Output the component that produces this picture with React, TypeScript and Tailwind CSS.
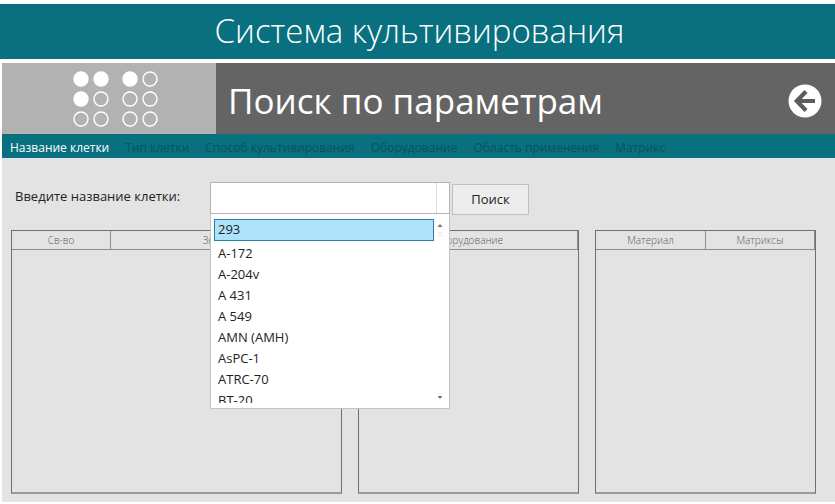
import { useState } from 'react';

interface Grid {
  id: string;
  columns: { title: string; width: string }[];
}

const TABS = [
  'Название клетки',
  'Тип клетки',
  'Способ культивирования',
  'Оборудование',
  'Область применения',
  'Матрикс',
];

const CELLS = ['293', 'A-172', 'A-204v', 'A 431', 'A 549', 'AMN (AMH)', 'AsPC-1', 'ATRC-70', 'BT-20'];

const GRIDS: Grid[] = [
  { id: 'props', columns: [{ title: 'Св-во', width: 'w-[30%]' }, { title: 'Значение', width: 'w-[70%]' }] },
  { id: 'equipment', columns: [{ title: 'Оборудование', width: 'w-full' }] },
  { id: 'matrix', columns: [{ title: 'Материал', width: 'w-1/2' }, { title: 'Матриксы', width: 'w-1/2' }] },
];

// Two blocks of 2x3 dots
const DOTS = [
  { x: 8, y: 8, filled: true },
  { x: 28, y: 8, filled: true },
  { x: 57, y: 8, filled: true },
  { x: 77, y: 8, filled: false },
  { x: 8, y: 28, filled: true },
  { x: 28, y: 28, filled: false },
  { x: 57, y: 28, filled: false },
  { x: 77, y: 28, filled: false },
  { x: 8, y: 48, filled: false },
  { x: 28, y: 48, filled: false },
  { x: 57, y: 48, filled: false },
  { x: 77, y: 48, filled: false },
];

function Logo() {
  return (
    <svg width="85" height="56" viewBox="0 0 85 56" aria-hidden="true">
      {DOTS.map((d) => (
        <circle
          key={`${d.x}-${d.y}`}
          cx={d.x}
          cy={d.y}
          r="7"
          fill={d.filled ? '#fff' : 'none'}
          stroke="#fff"
          strokeWidth="1.4"
        />
      ))}
    </svg>
  );
}

function BackIcon() {
  return (
    <svg width="34" height="34" viewBox="0 0 34 34" aria-hidden="true">
      <circle cx="17" cy="17" r="16.5" fill="#fff" />
      <path d="M27 17H10M18 7.5L8.8 17l9.2 9.5" fill="none" stroke="#5c5c5c" strokeWidth="4.2" />
    </svg>
  );
}

function CellPicker() {
  const [value, setValue] = useState('');
  const [selected, setSelected] = useState('293');

  return (
    <div className="relative w-60">
      <div className="flex h-8 border border-[#b4b4b4] bg-white">
        <input
          id="cell-name"
          type="text"
          role="combobox"
          aria-expanded="true"
          aria-controls="cell-list"
          value={value}
          onChange={(e) => setValue(e.target.value)}
          className="min-w-0 flex-1 px-2 outline-none"
        />
        <button type="button" aria-label="Открыть список" className="w-[13px] border-l border-[#dcdcdc]" />
      </div>

      {/* Open list */}
      <div className="absolute top-8 left-0 z-10 flex h-[195px] w-60 border border-t-0 border-[#c4c4c4] bg-white px-[3px] py-[5px]">
        <ul id="cell-list" role="listbox" aria-label="Клетки" className="flex-1 overflow-hidden">
          {CELLS.map((cell) => (
            <li
              key={cell}
              role="option"
              aria-selected={cell === selected}
              onClick={() => setSelected(cell)}
              className={
                cell === selected
                  ? 'mb-[2px] flex h-[22px] items-center border border-[#2a7fa8] bg-[#aee2fb] px-[3px]'
                  : 'flex h-[21px] items-center px-1'
              }
            >
              {cell}
            </li>
          ))}
        </ul>
        <div className="flex w-3 flex-col items-center justify-between pt-1">
          <svg width="8" height="16" viewBox="0 0 8 16" aria-hidden="true">
            <path d="M1.5 4L4 1l2.5 3z" fill="#707070" />
            <path d="M1.5 10h5M1.5 12.5h5" stroke="#e4e4e4" />
          </svg>
          <svg width="8" height="8" viewBox="0 0 8 8" aria-hidden="true">
            <path d="M1.5 1L4 4l2.5-3z" fill="#707070" />
          </svg>
        </div>
      </div>
    </div>
  );
}

function DataGrid({ columns }: Grid) {
  return (
    <div className="h-[264px] border border-b-2 border-[#707070] border-b-[#9a9a9a]">
      <table className="w-full table-fixed border-collapse">
        <thead>
          <tr className="h-[18px] border-b border-[#8c8c8c]">
            {columns.map((col) => (
              <th
                key={col.title}
                scope="col"
                className={`${col.width} border-r border-[#8c8c8c] p-0 text-[10px] leading-4 font-light text-[#555a6a]`}
              >
                {col.title}
              </th>
            ))}
          </tr>
        </thead>
      </table>
    </div>
  );
}

export default function App() {
  const [tab, setTab] = useState(TABS[0]);

  return (
    <div className="bg-white pt-1 font-['Open_Sans','Noto_Sans',sans-serif] text-[13px] text-[#222]">
      <header className="flex h-[55px] items-center justify-center bg-[#08707f] pb-[2px]">
        <h1 className="pl-1 text-[33px] leading-10 font-light text-white">Система культивирования</h1>
      </header>

      <main className="mt-1 ml-[2px] bg-[#e3e3e3]">
        <div className="flex h-[71px] bg-[#646464]">
          <div className="flex w-[214px] items-center justify-center bg-[#b2b2b2] pl-3">
            <Logo />
          </div>
          <h2 className="flex-1 self-center pt-1 pl-3 text-[35px] leading-10 text-white">Поиск по параметрам</h2>
          <button type="button" aria-label="Назад" className="mr-[13px] self-center pt-1">
            <BackIcon />
          </button>
        </div>

        <nav className="flex h-6 items-center gap-4 bg-[#08707f] px-2 pt-1 text-xs">
          {TABS.map((name) => (
            <button
              key={name}
              type="button"
              onClick={() => setTab(name)}
              className={name === tab ? 'text-white' : 'text-[#0a525f]'}
            >
              {name}
            </button>
          ))}
        </nav>

        <div className="pt-6 pr-[19px] pb-2 pl-[9px]">
          <form className="flex items-start" onSubmit={(e) => e.preventDefault()}>
            <label htmlFor="cell-name" className="w-[199px] pt-1 pl-1 leading-5">
              Введите название клетки:
            </label>
            <CellPicker />
            <button type="submit" className="mt-[2px] ml-[2px] h-[31px] w-[77px] border border-[#c0c0c0] bg-[#ececec]">
              Поиск
            </button>
          </form>

          <div className="mt-[15px] grid grid-cols-[3fr_2fr_2fr] gap-4">
            {GRIDS.map((grid) => (
              <DataGrid key={grid.id} {...grid} />
            ))}
          </div>
        </div>
      </main>
    </div>
  );
}
